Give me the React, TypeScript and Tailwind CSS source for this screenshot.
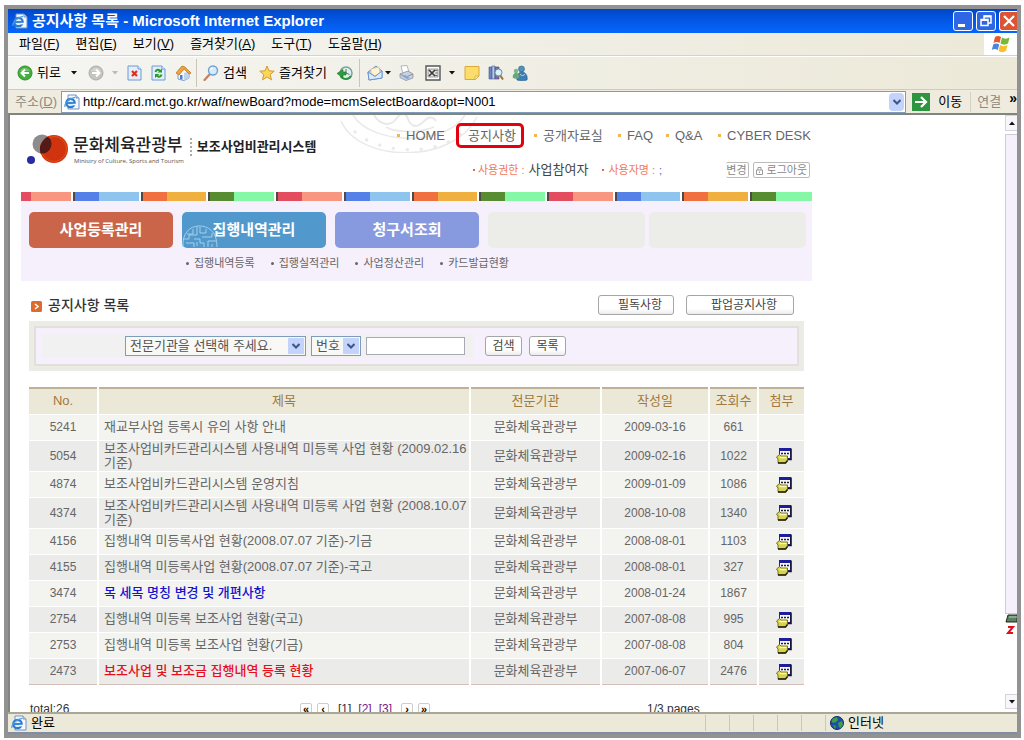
import type { ReactNode } from 'react'

interface Notice {
  no: number
  title: string
  date: string
  hits: number
  file: boolean
  tone?: 'blue' | 'red'
}

const notices: Notice[] = [
  { no: 5241, title: '재교부사업 등록시 유의 사항 안내', date: '2009-03-16', hits: 661, file: false },
  { no: 5054, title: '보조사업비카드관리시스템 사용내역 미등록 사업 현황 (2009.02.16 기준)', date: '2009-02-16', hits: 1022, file: true },
  { no: 4874, title: '보조사업비카드관리시스템 운영지침', date: '2009-01-09', hits: 1086, file: true },
  { no: 4374, title: '보조사업비카드관리시스템 사용내역 미등록 사업 현황 (2008.10.07 기준)', date: '2008-10-08', hits: 1340, file: true },
  { no: 4156, title: '집행내역 미등록사업 현황(2008.07.07 기준)-기금', date: '2008-08-01', hits: 1103, file: true },
  { no: 4155, title: '집행내역 미등록사업 현황(2008.07.07 기준)-국고', date: '2008-08-01', hits: 327, file: true },
  { no: 3474, title: '목 세목 명칭 변경 및 개편사항', date: '2008-01-24', hits: 1867, file: false, tone: 'blue' },
  { no: 2754, title: '집행내역 미등록 보조사업 현황(국고)', date: '2007-08-08', hits: 995, file: true },
  { no: 2753, title: '집행내역 미등록 보조사업 현황(기금)', date: '2007-08-08', hits: 804, file: true },
  { no: 2473, title: '보조사업 및 보조금 집행내역 등록 현황', date: '2007-06-07', hits: 2476, file: true, tone: 'red' },
]

const menus = [
  ['파일', 'F'],
  ['편집', 'E'],
  ['보기', 'V'],
  ['즐겨찾기', 'A'],
  ['도구', 'T'],
  ['도움말', 'H'],
]

const stripes = [
  ['bg-[#5580e8]', 'bg-[#8fc4ee]'],
  ['bg-[#f0703f]', 'bg-[#efb040]'],
  ['bg-[#578c31]', 'bg-[#84f8a4]'],
  ['bg-[#e44d60]', 'bg-[#f99680]'],
]

/* ---------- icons ---------- */

function IePageIcon({ className }: { className: string }) {
  return (
    <svg viewBox="0 0 16 16" className={className} aria-hidden="true">
      <path d="M4 1h8l3 3v11H4z" fill="#f4f8fd" stroke="#6f93c4" />
      <path d="M12 1v3h3" fill="#c9dcf2" stroke="#6f93c4" />
      <circle cx="6.5" cy="9" r="4.2" fill="#d9ecfb" stroke="#2b7cd0" strokeWidth="2.2" />
      <path d="M3 9h7.6" stroke="#2b7cd0" strokeWidth="1.8" />
      <path d="M8.5 10.6h4" stroke="#f4f8fd" strokeWidth="1.6" />
      <path d="M1 13C0 10 5 4 11 3.4" fill="none" stroke="#4f9be4" strokeWidth="1.2" />
    </svg>
  )
}

function ArrowCircle({ forward }: { forward?: boolean }) {
  return (
    <svg viewBox="0 0 16 16" className="size-4" aria-hidden="true">
      <circle cx="8" cy="8" r="7" fill={forward ? '#c4c4c0' : '#43b03c'} stroke={forward ? '#acaca8' : '#2f8c30'} />
      <path d="M3 6a5.5 5 0 0 1 10 0z" fill="#fff" opacity=".25" />
      <path
        d={forward ? 'M4 8h7M8 4.5 11.5 8 8 11.5' : 'M12 8H5M8 4.5 4.5 8 8 11.5'}
        fill="none"
        stroke="#fff"
        strokeWidth="2"
      />
    </svg>
  )
}

function Caret({ faded }: { faded?: boolean }) {
  return (
    <svg viewBox="0 0 6 4" className="h-1 w-1.5" aria-hidden="true">
      <path d="M0 0h6L3 3.5z" fill={faded ? '#bdbbb0' : '#111'} />
    </svg>
  )
}

function StopIcon() {
  return (
    <svg viewBox="0 0 15 16" className="h-4 w-[15px]" aria-hidden="true">
      <path d="M1 1h10l3 3v11H1z" fill="#e3eefb" stroke="#6a9ad6" />
      <path d="M11 1v3h3" fill="#fff" stroke="#6a9ad6" />
      <path d="m5 6 5 5m0-5-5 5" stroke="#dc2f1c" strokeWidth="2.2" />
    </svg>
  )
}

function RefreshIcon() {
  return (
    <svg viewBox="0 0 15 16" className="h-4 w-[15px]" aria-hidden="true">
      <path d="M1 1h10l3 3v11H1z" fill="#e3eefb" stroke="#6a9ad6" />
      <path d="M11 1v3h3" fill="#fff" stroke="#6a9ad6" />
      <path d="M4.500 7c.5-2.500 3.500-3 4.500-1" fill="none" stroke="#2a9a2b" strokeWidth="2" />
      <path d="M6.500 7.500H11V3.500z" fill="#2a9a2b" />
      <path d="M10.500 9.500c-.5 2.500-3.500 3-4.500 1" fill="none" stroke="#2a9a2b" strokeWidth="2" />
      <path d="M8.500 9H4v4z" fill="#2a9a2b" />
    </svg>
  )
}

function HomeIcon() {
  return (
    <svg viewBox="0 0 17 16" className="h-4 w-[17px]" aria-hidden="true">
      <path d="M3 8v6l6 1.5 5-2.5V7L9 3z" fill="#f4f7fc" stroke="#7d9bc8" />
      <path d="M9 15.5V8l5-1.5V13z" fill="#bfd3ee" />
      <path d="M1 8 7 1l3 1 6 6-2 1-5-5-5 6z" fill="#f0a33c" stroke="#c47520" strokeWidth=".8" />
      <path d="M5 10h2.5v4.5L5 14z" fill="#4a7fce" />
    </svg>
  )
}

function SearchIcon() {
  return (
    <svg viewBox="0 0 16 16" className="size-4" aria-hidden="true">
      <path d="m6.5 9.5-5 5.5" stroke="#c08060" strokeWidth="2.2" strokeLinecap="round" />
      <circle cx="10" cy="5.5" r="4.5" fill="#d3ebfb" stroke="#6da0d4" strokeWidth="1.4" />
      <path d="M7.5 5A2.500 2.500 0 0 1 10 3" fill="none" stroke="#fff" strokeWidth="1.2" />
    </svg>
  )
}

function StarIcon() {
  return (
    <svg viewBox="0 0 16 16" className="size-4" aria-hidden="true">
      <path d="m8 1 2 4.800 5.200.4-4 3.400 1.300 5.200L8 12l-4.500 2.800 1.300-5.200-4-3.400L6 5.800z" fill="#fbd65a" stroke="#d89a2a" />
    </svg>
  )
}

function HistoryIcon() {
  return (
    <svg viewBox="0 0 16 16" className="size-4" aria-hidden="true">
      <circle cx="9" cy="8" r="6" fill="#e2eef0" stroke="#7aa49a" strokeWidth="1.5" />
      <path d="M9 4v4l3.500 1.500" fill="none" stroke="#577" />
      <path d="M14 11c-2 4-9 4-10.500-.5" fill="none" stroke="#2e9440" strokeWidth="2" />
      <path d="M0 8.500 6 4.500V7h3v3H6v2.500z" fill="#2e9e3c" stroke="#1c7028" strokeWidth=".6" />
    </svg>
  )
}

function MailIcon() {
  return (
    <svg viewBox="0 0 16 16" className="size-4" aria-hidden="true">
      <path d="M1 7 9 1l6 5v7L2 15z" fill="#bcd7f5" stroke="#6b95cf" />
      <path d="m4 4 8-2 1 6-5 3-4-3z" fill="#fff4cf" stroke="#d8b878" strokeWidth=".6" />
      <path d="m1 7 7 4.500L15 6v7L2 15z" fill="#dceafa" stroke="#6b95cf" />
    </svg>
  )
}

function PrinterIcon() {
  return (
    <svg viewBox="0 0 16 16" className="size-4" aria-hidden="true">
      <path d="m3 1 6-.5L11 7 5 9z" fill="#fff" stroke="#9aa6bc" strokeWidth=".8" />
      <path d="m2 9 8-3 5 3v4l-7 2.500-6-3z" fill="#cdd1dc" stroke="#8c91a0" strokeWidth=".8" />
      <path d="m2 9 6 3 7-3" fill="none" stroke="#8c91a0" />
      <path d="m4 11 5 3 3-1-5-3z" fill="#7ca9df" />
    </svg>
  )
}

function ExcelIcon() {
  return (
    <svg viewBox="0 0 16 16" className="size-4" aria-hidden="true">
      <path d="M1 1h14v14H1z" fill="#fff" stroke="#555" strokeWidth="1.4" />
      <path d="M3 4h10v8H3z" fill="#e2e2e0" stroke="#888" strokeWidth=".8" />
      <path d="m4 5 6 6m0-6-6 6" stroke="#3a3a3a" strokeWidth="1.6" />
      <path d="M10 5.500h2.500m-2 2.500h2m-2.500 2.500h2.500" stroke="#666" />
    </svg>
  )
}

function NoteIcon() {
  return (
    <svg viewBox="0 0 16 16" className="size-4" aria-hidden="true">
      <path d="M1 1.5h14V11l-4 3.500H1z" fill="#fbdd6c" stroke="#dba93a" />
      <path d="M15 11h-4v3.500z" fill="#fff3bd" stroke="#dba93a" strokeWidth=".8" />
    </svg>
  )
}

function ResearchIcon() {
  return (
    <svg viewBox="0 0 16 16" className="size-4" aria-hidden="true">
      <path d="M1 2h3v12H1z" fill="#6688c8" stroke="#3c5894" strokeWidth=".6" />
      <path d="M4 1h3v13H4z" fill="#b8c8e0" stroke="#3c5894" strokeWidth=".6" />
      <path d="M7 2h4v12H7z" fill="#7f6f9e" stroke="#46406e" strokeWidth=".6" />
      <path d="m12 10 3 4.500" stroke="#a36d35" strokeWidth="2" />
      <circle cx="10.5" cy="7.5" r="3.5" fill="#d9f1fa" stroke="#5e8fae" />
    </svg>
  )
}

function MessengerIcon() {
  return (
    <svg viewBox="0 0 16 16" className="size-4" aria-hidden="true">
      <circle cx="9.5" cy="4" r="3" fill="#4d93b8" stroke="#2c6286" strokeWidth=".6" />
      <path d="M5 15c-1-5 2-8 5-8s6 3 5 8c-3 1-7 1-10 0z" fill="#3c7fb4" stroke="#24557e" strokeWidth=".6" />
      <circle cx="4" cy="6" r="2.2" fill="#7ab98c" />
      <path d="M1 13c-1-3 1-5 3-5s4 2 3 5c-2 1-4 1-6 0z" fill="#66a879" />
      <path d="M8 9c1 2 4 2 5 0" fill="none" stroke="#bfe1ee" />
    </svg>
  )
}

function WindowsFlag() {
  return (
    <svg viewBox="0 0 20 18" className="h-[18px] w-5" aria-hidden="true">
      <path d="M4 2c2-1.500 4-1.500 6 0L8.500 8c-2-1.500-4-1.500-6 0z" fill="#e8582c" />
      <path d="M11 2.500c2 1.500 5 1.500 7.500 0L17 8.500c-2.500 1.500-5 1.500-7.500 0z" fill="#79b83a" />
      <path d="M2.200 9.500c2-1.500 4-1.500 6 0L6.800 15c-2-1.500-4-1.500-6 0z" fill="#4a86dc" />
      <path d="M9 10c2 1.500 5 1.500 7.500 0L15 16c-2.500 1.500-5 1.500-7.500 0z" fill="#f6bf2c" />
    </svg>
  )
}

function AttachIcon() {
  return (
    <svg viewBox="0 0 16 17" className="mx-auto block h-[17px] w-4" aria-label="첨부파일" role="img">
      <path d="M3.5 1.500h11v10h-11z" fill="#f6f6fb" stroke="#24248c" />
      <path d="M3 1h12v3H3z" fill="#1c1c9c" />
      <path d="M5 6.500h2m1 0h2m1 0h2" stroke="#222" strokeWidth="1.5" />
      <path d="M15 1.500v11h-4" fill="none" stroke="#14142e" strokeWidth="1.6" />
      <path d="m.5 10 3-2.500L5 9h6.500v4.500l-2 2.500H2v-4z" fill="#d8d34a" stroke="#6b6720" strokeWidth=".9" />
      <path d="M3.500 10.500h7" stroke="#fbf9c4" strokeWidth="1.4" />
      <path d="M2 16h7.500l2-2.500" fill="none" stroke="#1e1c08" strokeWidth="1.4" />
    </svg>
  )
}

function MinistryMark() {
  return (
    <svg viewBox="0 0 42 32" className="h-8 w-[42px]" aria-hidden="true">
      <circle cx="15" cy="10" r="9.5" fill="#8d8d8d" />
      <circle cx="27" cy="15" r="14" fill="#d2330f" />
      <circle cx="27" cy="15" r="12.5" fill="none" stroke="#e8641c" strokeWidth="1" opacity=".6" />
      <path d="M17.500 5.200a14 14 0 0 0-4 14.200A9.500 9.500 0 0 0 24 13a9.500 9.500 0 0 0-3-10.200 14 14 0 0 0-3.500 2.400z" fill="#541a16" />
      <circle cx="4" cy="26" r="4" fill="#2a2aa4" />
    </svg>
  )
}

function SealOutline() {
  return (
    <svg viewBox="0 0 140 38" className="h-[38px] w-[140px]" fill="none" stroke="#ebe9e8" aria-hidden="true">
      <path d="M1 6c18 42 112 44 136-4" strokeWidth="1.5" />
      <path d="M13 0c18 30 92 32 112 0" strokeWidth="1.5" />
      <path d="M34 0c6 10 16 12 22 4s10-6 12 0 8 10 14 4 10-8 14-2" strokeWidth="2" />
      <path d="M46 12c10 6 34 6 48 0" strokeWidth="1.5" />
      <path d="M14 16c26 24 84 26 110 0" strokeWidth="3" strokeDasharray="3 11" />
    </svg>
  )
}

function MazeSeal() {
  return (
    <svg viewBox="0 0 36 23" className="absolute bottom-0 left-0 h-[23px] w-9" fill="none" stroke="#a6cfea" aria-hidden="true">
      <path d="M1 22C0 8 8 1 17 1s18 5 18 21M5 9h6V4m4-2v8H7v4H1m17-12v6h6V4m-4 8h10V8m-4 8h8M4 18h8v4m0-8h6v4h4v4m-7-1v-4m11 5v-6m4 6v-3" />
    </svg>
  )
}

function Globe() {
  return (
    <svg viewBox="0 0 14 14" className="size-3.5" aria-hidden="true">
      <circle cx="7" cy="7" r="6.5" fill="#1d4fa8" stroke="#112d66" />
      <path d="M3 2.500 7 1l1 3-2 2-3 1-1.500-2zM8 7l4-2 1 3-2 4-2-1z" fill="#3f9f45" />
      <path d="m3 9 3 1-1 3z" fill="#3f9f45" />
    </svg>
  )
}

/* ---------- small parts ---------- */

function ToolButton({ label, className, children }: { label: string; className: string; children: ReactNode }) {
  return (
    <button type="button" aria-label={label} className={`flex h-6 shrink-0 items-center ${className}`}>
      {children}
    </button>
  )
}

function Dropdown({ label, option, className }: { label: string; option: string; className: string }) {
  return (
    <div className={`relative h-5 border border-[#7f9db9] bg-[#f8f8f6] ${className}`}>
      <select aria-label={label} className="block h-full w-full appearance-none pl-1 text-[13px] leading-4 text-[#555]">
        <option>{option}</option>
      </select>
      <span className="pointer-events-none absolute inset-y-px right-px flex w-4 items-center justify-center bg-[#c3d3fb]">
        <Chevron />
      </span>
    </div>
  )
}

function Chevron() {
  return (
    <svg viewBox="0 0 8 6" className="h-1.5 w-2" aria-hidden="true">
      <path d="m.5 1 3.500 3.500L7.500 1" fill="none" stroke="#3c5688" strokeWidth="2" />
    </svg>
  )
}

function PageButton({ className, children }: { className: string; children: ReactNode }) {
  return (
    <button
      type="button"
      className={`h-5 rounded-[3px] border border-[#a5a5a5] bg-linear-to-b from-white from-70% to-[#ececec] text-[12px] leading-4 text-[#444] ${className}`}
    >
      {children}
    </button>
  )
}

function TopLink({ boxed, children }: { boxed?: boolean; children: ReactNode }) {
  if (boxed) {
    return (
      <a href="#" className="mr-2 flex h-[25px] items-center justify-center rounded-[5px] border-[3px] border-[#e3000f] pl-1">
        {children}
      </a>
    )
  }
  return (
    <a href="#" className="flex items-center gap-1.5 pl-0.5">
      <span className="size-[3px] bg-[#efb952]" />
      {children}
    </a>
  )
}

/* ---------- browser chrome ---------- */

function TitleBar() {
  return (
    <div className="flex h-6 shrink-0 items-center bg-linear-to-b from-[#0046c8] via-[#0358e6] to-[#0666fb] pl-1 text-white">
      <IePageIcon className="size-4" />
      <h1 className="ml-1 flex-1 text-[15px] font-bold">공지사항 목록 - Microsoft Internet Explorer</h1>
      <div className="flex gap-[3px]">
        <button type="button" aria-label="최소화" className="size-5 rounded-[3px] border border-white bg-[#2f66e4]">
          <svg viewBox="0 0 18 18"><path d="M4 12h7v3H4z" fill="#fff" /></svg>
        </button>
        <button type="button" aria-label="이전 크기로" className="size-5 rounded-[3px] border border-white bg-[#2f66e4]">
          <svg viewBox="0 0 18 18" fill="none" stroke="#fff" strokeWidth="1.5">
            <path d="M7 7V4h7v7h-3M4 7.500h7v6H4z" />
            <path d="M7 4.500h7M4 8h7" strokeWidth="2" />
          </svg>
        </button>
        <button type="button" aria-label="닫기" className="h-5 w-[18px] rounded-l-[3px] border border-r-0 border-white bg-[#dc5434]">
          <svg viewBox="0 0 17 18"><path d="m4 4 10 10M14 4 4 14" stroke="#fff" strokeWidth="2.2" /></svg>
        </button>
      </div>
    </div>
  )
}

function MenuBar() {
  return (
    <div className="flex h-[23px] shrink-0 border-b border-[#d6d3c4] bg-linear-to-r from-[#f5f5f3] to-[#ece9d8]">
      <nav className="flex flex-1 items-center gap-4 pl-[11px]">
        {menus.map(([name, key]) => (
          <button key={key} type="button">
            {name}(<u>{key}</u>)
          </button>
        ))}
      </nav>
      <div className="flex w-[33px] items-center justify-center bg-white">
        <WindowsFlag />
      </div>
    </div>
  )
}

function Toolbar() {
  return (
    <div className="flex h-[34px] shrink-0 items-center border-t border-b border-t-white border-b-[#cfccbc] bg-linear-to-r from-[#f5f5f2] to-[#ece9d8] pl-[9px]">
      <ToolButton label="뒤로" className="w-[71px] gap-1">
        <ArrowCircle />
        <span className="mr-1.5">뒤로</span>
        <Caret />
      </ToolButton>
      <ToolButton label="앞으로" className="w-[39px] gap-2">
        <ArrowCircle forward />
        <Caret faded />
      </ToolButton>
      <ToolButton label="중지" className="w-6"><StopIcon /></ToolButton>
      <ToolButton label="새로 고침" className="w-6"><RefreshIcon /></ToolButton>
      <ToolButton label="홈" className="w-[21px]"><HomeIcon /></ToolButton>
      <span className="mr-1.5 h-7 w-px bg-[#c9c6b6]" />
      <ToolButton label="검색" className="w-14 gap-1"><SearchIcon />검색</ToolButton>
      <ToolButton label="즐겨찾기" className="w-[78px] gap-1"><StarIcon />즐겨찾기</ToolButton>
      <ToolButton label="목록보기" className="w-[22px]"><HistoryIcon /></ToolButton>
      <span className="mr-[7px] h-7 w-px bg-[#c9c6b6]" />
      <ToolButton label="메일" className="w-[31px] gap-0.5"><MailIcon /><Caret /></ToolButton>
      <ToolButton label="인쇄" className="w-[27px]"><PrinterIcon /></ToolButton>
      <ToolButton label="편집" className="w-[39px] gap-2"><ExcelIcon /><Caret /></ToolButton>
      <ToolButton label="메모" className="w-6"><NoteIcon /></ToolButton>
      <ToolButton label="리서치" className="w-6"><ResearchIcon /></ToolButton>
      <ToolButton label="메신저" className="w-6"><MessengerIcon /></ToolButton>
    </div>
  )
}

function AddressBar() {
  return (
    <div className="flex h-[23px] shrink-0 items-center bg-[#efecdf] pl-[7px]">
      <label htmlFor="address" className="w-[46px] text-[#8c8a80]">
        주소(<u>D</u>)
      </label>
      <div className="flex h-[22px] flex-1 items-center border border-[#7f9db9] bg-white pr-px pl-0.5">
        <IePageIcon className="size-4" />
        <input
          id="address"
          className="ml-[3px] min-w-0 flex-1 text-[13px] text-black outline-none"
          defaultValue="http://card.mct.go.kr/waf/newBoard?mode=mcmSelectBoard&opt=N001"
        />
        <button type="button" aria-label="주소 목록" className="flex h-[18px] w-[15px] items-center justify-center rounded-sm bg-[#c3d3fb]">
          <Chevron />
        </button>
      </div>
      <button type="button" className="ml-1.5 flex w-[58px] items-center gap-2">
        <svg viewBox="0 0 18 18" className="size-[18px]" aria-hidden="true">
          <path d="M0 0h18v18H0z" fill="#2f9440" />
          <path d="M3 9h11M9 4l5 5-5 5" fill="none" stroke="#fff" strokeWidth="2.2" />
        </svg>
        이동
      </button>
      <span className="h-5 w-px bg-[#d5d2c2]" />
      <span className="ml-1.5 text-[#8c8a80]">연결</span>
      <button type="button" aria-label="더 보기" className="ml-2 self-start text-[14px] leading-4 font-bold">»</button>
    </div>
  )
}

function ScrollBar() {
  return (
    <div className="flex w-3 shrink-0 flex-col overflow-hidden">
      <button type="button" aria-label="위로" className="flex h-4 items-center justify-center border border-r-0 border-[#d5d3dc] bg-[#f8f6fb]">
        <span className="rotate-180"><Caret /></span>
      </button>
      <div className="mt-[3px] h-[480px] border border-r-0 border-[#d0cbd8] bg-[#f6effc]" />
      <svg viewBox="0 0 12 28" className="h-7 w-3" aria-hidden="true">
        <path d="M3 1h9v7H1z" fill="#5d7f63" stroke="#1c2a1e" />
        <path d="M4 3h8" stroke="#b5d3b8" />
        <path d="M3 13h5l-5 6h5" fill="none" stroke="#e11020" strokeWidth="2" />
      </svg>
      <button type="button" aria-label="아래로" className="mt-auto mb-[3px] flex h-[15px] items-center justify-center border border-r-0 border-[#d5d3dc] bg-[#f8f6fb]">
        <Caret />
      </button>
    </div>
  )
}

function StatusBar() {
  return (
    <div className="flex h-[22px] shrink-0 items-center border-t-2 border-b-2 border-t-[#a9a797] border-b-[#7d8ea6] bg-[#ece9d8] pl-[3px]">
      <IePageIcon className="size-4" />
      <span className="ml-1 flex-1">완료</span>
      <div className="flex">
        {[1, 2, 3, 4, 5].map((n) => (
          <span key={n} className="h-4 w-6 border-l border-[#cbc8b6]" />
        ))}
      </div>
      <div className="flex w-48 items-center gap-1 border-l border-[#cbc8b6] pl-1">
        <Globe />
        인터넷
      </div>
    </div>
  )
}

/* ---------- page ---------- */

function SiteHeader() {
  return (
    <header className="flex h-[77px] justify-between">
      <div className="flex items-start pt-[19px] pl-1.5">
        <MinistryMark />
        <div className="mt-px ml-1">
          <p className="text-[17px] leading-[22px] font-medium text-[#222]">문화체육관광부</p>
          <p className="pl-px font-['Open_Sans'] text-[6px] leading-2 text-[#555]">Ministry of Culture, Sports and Tourism</p>
        </div>
        <span className="mt-1 ml-1.5 h-[18px] border-l-2 border-dotted border-[#aaa]" />
        <p className="mt-1 ml-[5px] text-[13px] leading-[18px] font-bold text-[#222]">보조사업비관리시스템</p>
      </div>
      <div className="relative flex w-[472px] flex-col">
        <div className="absolute top-0 left-0">
          <SealOutline />
        </div>
        <nav className="relative mt-2 ml-[55px] grid grid-cols-[61px_76px_84px_48px_52px_1fr] text-[13px] leading-4 text-[#666]">
          <TopLink>HOME</TopLink>
          <TopLink boxed>공지사항</TopLink>
          <TopLink>공개자료실</TopLink>
          <TopLink>FAQ</TopLink>
          <TopLink>Q&amp;A</TopLink>
          <TopLink>CYBER DESK</TopLink>
        </nav>
        <div className="mt-3 mr-0.5 ml-[133px] flex items-center text-[11px] leading-5">
          <span className="mr-[3px] size-0.5 bg-[#e06a4c]" />
          <span className="text-[#ef7a5c]">사용권한 :</span>
          <span className="ml-1 text-[13px] text-[#444]">사업참여자</span>
          <span className="mr-1 ml-3.5 size-0.5 bg-[#e06a4c]" />
          <span className="text-[#ef7a5c]">사용자명 :</span>
          <span className="ml-1 text-[#5a5ad0]">;</span>
          <button type="button" className="ml-auto h-4 rounded-xs border border-l-0 border-[#bbb] pr-px leading-3 text-[#888]">변경</button>
          <button type="button" className="ml-1 flex h-4 items-center gap-1 rounded-xs border border-[#bbb] px-0.5 leading-3 text-[#888]">
            <svg viewBox="0 0 7 9" className="h-[9px] w-[7px]" fill="none" stroke="#999" aria-hidden="true">
              <path d="M.5 4h6v4.500h-6zM2 4V1.500h3V4M3.500 5.500V7" />
            </svg>
            로그아웃
          </button>
        </div>
      </div>
    </header>
  )
}

function Stripe({ index }: { index: number }) {
  const [dark, light] = stripes[index % stripes.length]
  return (
    <>
      <span className="w-0.5 bg-[#4d4a48]" />
      <span className={`w-6 ${dark}`} />
      <span className={`flex-1 ${light}`} />
    </>
  )
}

function ColorBar() {
  return (
    <div className="flex h-[9px]">
      <div className="flex w-[50px]">
        <span className="w-2.5 bg-[#e44d60]" />
        <span className="flex-1 bg-[#f99680]" />
      </div>
      {[0, 1, 2, 3, 4, 5, 6, 7, 8, 9].map((i) => (
        <div key={i} className="flex flex-1 pl-0.5">
          <Stripe index={i} />
        </div>
      ))}
      <div className="flex w-16 pl-0.5">
        <Stripe index={2} />
      </div>
    </div>
  )
}

function MainNav() {
  return (
    <div className="h-20 bg-[#f6effc] pt-[11px]">
      <nav className="flex h-9 pr-1.5 pl-2 text-[15px] font-bold text-white">
        <a href="#" className="mr-[9px] flex w-36 items-center justify-center rounded-[5px] bg-[#cb6549]">사업등록관리</a>
        <a href="#" className="relative mr-[9px] flex w-36 items-center justify-center rounded-[5px] bg-[#5199cd]">
          <MazeSeal />
          <span className="relative">집행내역관리</span>
        </a>
        <a href="#" className="mr-[9px] flex w-36 items-center justify-center rounded-[5px] bg-[#879ae0]">청구서조회</a>
        <span className="mr-1 flex-1 rounded-[5px] bg-[#ecede8]" />
        <span className="flex-1 rounded-[5px] bg-[#ecede8]" />
      </nav>
      <nav className="mt-[5px] flex gap-4 pl-[165px] text-[11px] leading-5 text-[#666]">
        {['집행내역등록', '집행실적관리', '사업정산관리', '카드발급현황'].map((name) => (
          <a key={name} href="#" className="flex items-center gap-[5px]">
            <span className="size-[3px] rounded-full bg-[#666]" />
            {name}
          </a>
        ))}
      </nav>
    </div>
  )
}

function SearchPanel() {
  return (
    <form className="mt-1.5 flex h-[50px] items-stretch border-[5px] border-[#ecece6]">
      <div className="flex flex-1 items-center border-2 border-[#e3dfda] bg-[#f6effc] pl-1.5">
        <div className="flex h-6 items-center gap-[5px] bg-[#f2f1f2] pr-2 pl-[83px]">
          <Dropdown label="전문기관" option="전문기관을 선택해 주세요." className="w-[181px]" />
          <Dropdown label="검색 조건" option="번호" className="w-[50px]" />
          <input aria-label="검색어" className="h-[18px] w-[99px] border border-[#a9a9b5] bg-white px-1 text-[13px]" />
        </div>
        <PageButton className="ml-3 w-[37px]">검색</PageButton>
        <PageButton className="ml-[7px] w-[37px]">목록</PageButton>
      </div>
    </form>
  )
}

function NoticeTable() {
  return (
    <table className="mt-4 w-full table-fixed border-collapse border-t-2 border-b border-t-[#c0b096] border-b-[#d4bfb8] text-center text-[13px] leading-[14px] text-[#666]">
      <colgroup>
        <col className="w-[69px]" />
        <col />
        <col className="w-[131px]" />
        <col className="w-[108px]" />
        <col className="w-[49px]" />
        <col className="w-[46px]" />
      </colgroup>
      <thead>
        <tr className="h-[26px] bg-[#ece8d8] text-[#a07840]">
          {['No.', '제목', '전문기관', '작성일', '조회수', '첨부'].map((name) => (
            <th key={name} scope="col" className="border-r-2 border-white p-0 font-normal last:border-r-0">
              {name}
            </th>
          ))}
        </tr>
      </thead>
      <tbody>
        {notices.map((row) => (
          <tr
            key={row.no}
            className={`border-t border-white odd:bg-[#f3f3ef] even:bg-[#ebebe9] ${row.title.length > 36 ? 'h-[31px]' : 'h-[26px]'}`}
          >
            <td className="border-r-2 border-white p-0 text-[12px]">{row.no}</td>
            <td className="border-r-2 border-white p-0 pl-[5px] text-left">
              <a
                href="#"
                className={
                  row.tone === 'blue' ? 'font-medium text-[#1414d2]' : row.tone === 'red' ? 'font-medium text-[#e60f1e]' : ''
                }
              >
                {row.title}
              </a>
            </td>
            <td className="border-r-2 border-white p-0">문화체육관광부</td>
            <td className="border-r-2 border-white p-0 text-[12px]">{row.date}</td>
            <td className="border-r-2 border-white p-0 text-[12px]">{row.hits}</td>
            <td className="p-0 pl-1">{row.file && <AttachIcon />}</td>
          </tr>
        ))}
      </tbody>
    </table>
  )
}

function PagerButton({ children }: { children: ReactNode }) {
  return (
    <button type="button" className="flex size-3 items-center justify-center rounded-xs border border-[#ccc] text-[11px] leading-3 font-bold text-black">
      {children}
    </button>
  )
}

function Pager() {
  return (
    <div className="mt-4 flex text-[12px] leading-4 text-[#333]">
      <span className="w-[271px] pl-px">total:26</span>
      <nav className="flex flex-1 items-center gap-[5px]">
        <PagerButton>«</PagerButton>
        <PagerButton>‹</PagerButton>
        <a href="#" className="ml-1">[1]</a>
        <a href="#" className="ml-0.5 text-[#7a1a86]">[2]</a>
        <a href="#" className="mr-1 ml-0.5 text-[#7a1a86]">[3]</a>
        <PagerButton>›</PagerButton>
        <PagerButton>»</PagerButton>
      </nav>
      <span className="w-[157px]">1/3 pages</span>
    </div>
  )
}

function NoticePage() {
  return (
    <main className="w-full max-w-[791px]">
      <SiteHeader />
      <ColorBar />
      <MainNav />
      <section className="pr-2 pl-2">
        <div className="mt-3.5 flex h-5 items-center pr-2.5">
          <svg viewBox="0 0 11 11" className="mt-0.5 ml-0.5 size-[11px]" aria-hidden="true">
            <rect width="11" height="11" rx="1.5" fill="#df6a2c" />
            <path d="m4 3 3 2.500L4 8" fill="none" stroke="#fff" strokeWidth="1.5" />
          </svg>
          <h2 className="ml-1.5 flex-1 text-[14px] font-medium text-[#333]">공지사항 목록</h2>
          <PageButton className="w-[76px] pl-2">필독사항</PageButton>
          <PageButton className="ml-3 w-[108px] pl-2">팝업공지사항</PageButton>
        </div>
        <SearchPanel />
        <NoticeTable />
        <Pager />
      </section>
    </main>
  )
}

export default function App() {
  return (
    <div className="h-screen bg-white pt-[5px] pr-[3px] pb-0.5 pl-1 font-['Liberation_Sans','Noto_Sans_CJK_KR',sans-serif] text-[13px] leading-4 text-black">
      <div className="flex h-full flex-col border-4 border-[#929292]">
        <TitleBar />
        <MenuBar />
        <Toolbar />
        <AddressBar />
        <div className="flex min-h-0 flex-1 overflow-hidden border-t-2 border-l-2 border-[#80857f]">
          <div className="min-w-0 flex-1 overflow-hidden pl-[11px]">
            <NoticePage />
          </div>
          <ScrollBar />
        </div>
        <StatusBar />
      </div>
    </div>
  )
}
